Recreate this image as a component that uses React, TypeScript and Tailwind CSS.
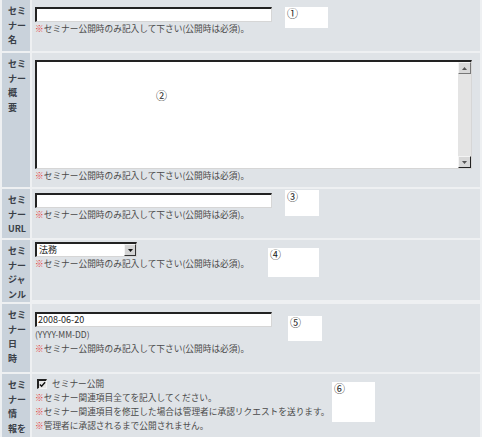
import type { ReactNode } from 'react';

const font = { fontFamily: '"Noto Sans CJK JP", "Noto Sans", sans-serif' };

// 注意書き（赤い※付き）
const Note = ({ children }: { children: ReactNode }) => (
  <div className="text-[8.7px] leading-[14px] text-[#4a4a4a] whitespace-nowrap">
    <span className="text-[#e53935] font-bold">※</span>
    {children}
  </div>
);

// 番号付きの白いボックス
const Marker = ({ n, className }: { n: string; className: string }) => (
  <div className={`absolute bg-white ${className}`}>
    <span className="absolute left-[2px] top-[1px] text-[11px] leading-[11px] text-[#222]">{n}</span>
  </div>
);

const TextInput = ({ value = '' }: { value?: string }) => (
  <div className="w-[237px] h-[15px] bg-white border-t-2 border-l-2 border-t-[#222] border-l-[#222] border-b border-r border-b-[#d6d6d6] border-r-[#d6d6d6] text-[9px] leading-[12px] pl-[1px] text-[#222]">
    {value}
  </div>
);

const Label = ({ lines }: { lines: string[] }) => (
  <div className="bg-[#c9d2db] pl-[6px] pt-[4px] text-[9px] font-bold leading-[14.5px] text-[#3a4048] overflow-hidden">
    {lines.map((l) => (
      <div key={l}>{l}</div>
    ))}
  </div>
);

const MSG = 'セミナー公開時のみ記入して下さい(公開時は必須)。';

function App() {
  return (
    <div className="w-[482px] h-[437px] overflow-hidden bg-[#eef0f2]" style={font}>
      <div className="grid grid-cols-[28px_1fr] gap-x-[2px] gap-y-[2px] pl-[2px] pr-[2px]">
        {/* セミナー名 */}
        <div className="contents">
          <Label lines={['セミ', 'ナー', '名']} />
          <div className="relative h-[51px] bg-[#dfe3e7] pl-[3px] pt-[7px]">
            <TextInput />
            <Note>{MSG}</Note>
            <Marker n="①" className="left-[253px] top-[7px] w-[43px] h-[21px]" />
          </div>
        </div>

        {/* セミナー概要 */}
        <div className="contents">
          <Label lines={['セミ', 'ナー', '概', '要']} />
          <div className="relative h-[134px] bg-[#dfe3e7] pl-[3px] pt-[7px]">
            <div className="flex w-[437px] h-[109px] bg-white border-t-2 border-l-2 border-t-[#222] border-l-[#222] border-b border-r border-b-[#d6d6d6] border-r-[#d6d6d6]">
              <div className="flex-1" />
              <div className="flex flex-col w-[13px] bg-[#e4e4e4]">
                <div className="flex h-[12px] items-center justify-center bg-[#d8d8d8] border border-[#f4f4f4] border-r-[#777] border-b-[#777]">
                  <svg width="5" height="3" viewBox="0 0 5 3"><path d="M0 3 L2.5 0 L5 3Z" fill="#555" /></svg>
                </div>
                <div className="flex-1" />
                <div className="flex h-[12px] items-center justify-center bg-[#d8d8d8] border border-[#f4f4f4] border-r-[#222] border-b-[#222]">
                  <svg width="5" height="3" viewBox="0 0 5 3"><path d="M0 0 L2.5 3 L5 0Z" fill="#555" /></svg>
                </div>
              </div>
            </div>
            <Note>{MSG}</Note>
            <span className="absolute left-[124px] top-[37px] text-[11px] leading-[11px] text-[#222]">②</span>
          </div>
        </div>

        {/* セミナーURL */}
        <div className="contents">
          <Label lines={['セミ', 'ナー', 'URL']} />
          <div className="relative h-[49px] bg-[#dfe3e7] pl-[3px] pt-[4px]">
            <TextInput />
            <Note>{MSG}</Note>
            <Marker n="③" className="left-[253px] top-[1px] w-[34px] h-[26px]" />
          </div>
        </div>

        {/* セミナージャンル */}
        <div className="contents">
          <Label lines={['セミ', 'ナー', 'ジャ', 'ンル']} />
          <div className="relative h-[60px] bg-[#dfe3e7] pl-[3px] pt-[2px]">
            <div className="flex w-[102px] h-[15px] bg-white border-t-2 border-l-2 border-t-[#222] border-l-[#222] border-b border-r border-b-[#d6d6d6] border-r-[#d6d6d6]">
              <div className="flex-1 pl-[2px] text-[9px] leading-[12px] text-[#222]">法務</div>
              <div className="flex w-[12px] items-center justify-center bg-[#d4d4d4] border border-[#f4f4f4] border-r-[#333] border-b-[#333]">
                <svg width="5" height="3" viewBox="0 0 5 3"><path d="M0 0 L2.5 3 L5 0Z" fill="#111" /></svg>
              </div>
            </div>
            <Note>{MSG}</Note>
            <Marker n="④" className="left-[236px] top-[8px] w-[51px] h-[29px]" />
          </div>
        </div>

        {/* セミナー日時 */}
        <div className="contents">
          <Label lines={['セミ', 'ナー', '日', '時']} />
          <div className="relative h-[68px] bg-[#dfe3e7] pl-[3px] pt-[8px]">
            <TextInput value="2008-06-20" />
            <div className="text-[8.5px] leading-[15px] text-[#4a4a4a]">(YYYY-MM-DD)</div>
            <div className="leading-[15px]">
              <Note>{MSG}</Note>
            </div>
            <Marker n="⑤" className="left-[256px] top-[12px] w-[34px] h-[25px]" />
          </div>
        </div>

        {/* セミナー情報を公開 */}
        <div className="contents">
          <Label lines={['セミ', 'ナー', '情', '報を']} />
          <div className="relative h-[90px] bg-[#dfe3e7] pl-[5px] pt-[3px]">
            <div className="flex items-center gap-[5px] h-[14px] text-[8.7px] text-[#4a4a4a]">
              <div className="flex w-[10px] h-[10px] items-center justify-center bg-[#e8e8e8] border-t-2 border-l-2 border-t-[#222] border-l-[#222] border-b border-r border-b-[#f4f4f4] border-r-[#f4f4f4]">
                <svg width="8" height="7" viewBox="0 0 8 7">
                  <path d="M1 3.5 L3 5.5 L7 1" stroke="#111" strokeWidth="1.6" fill="none" />
                </svg>
              </div>
              <span>セミナー公開</span>
            </div>
            <div className="-ml-[2px]">
              <Note>セミナー関連項目全てを記入してください。</Note>
              <Note>セミナー関連項目を修正した場合は管理者に承認リクエストを送ります。</Note>
              <Note>管理者に承認されるまで公開されません。</Note>
            </div>
            <Marker n="⑥" className="left-[300px] top-[8px] w-[43px] h-[40px]" />
          </div>
        </div>
      </div>
    </div>
  );
}

export default App;
